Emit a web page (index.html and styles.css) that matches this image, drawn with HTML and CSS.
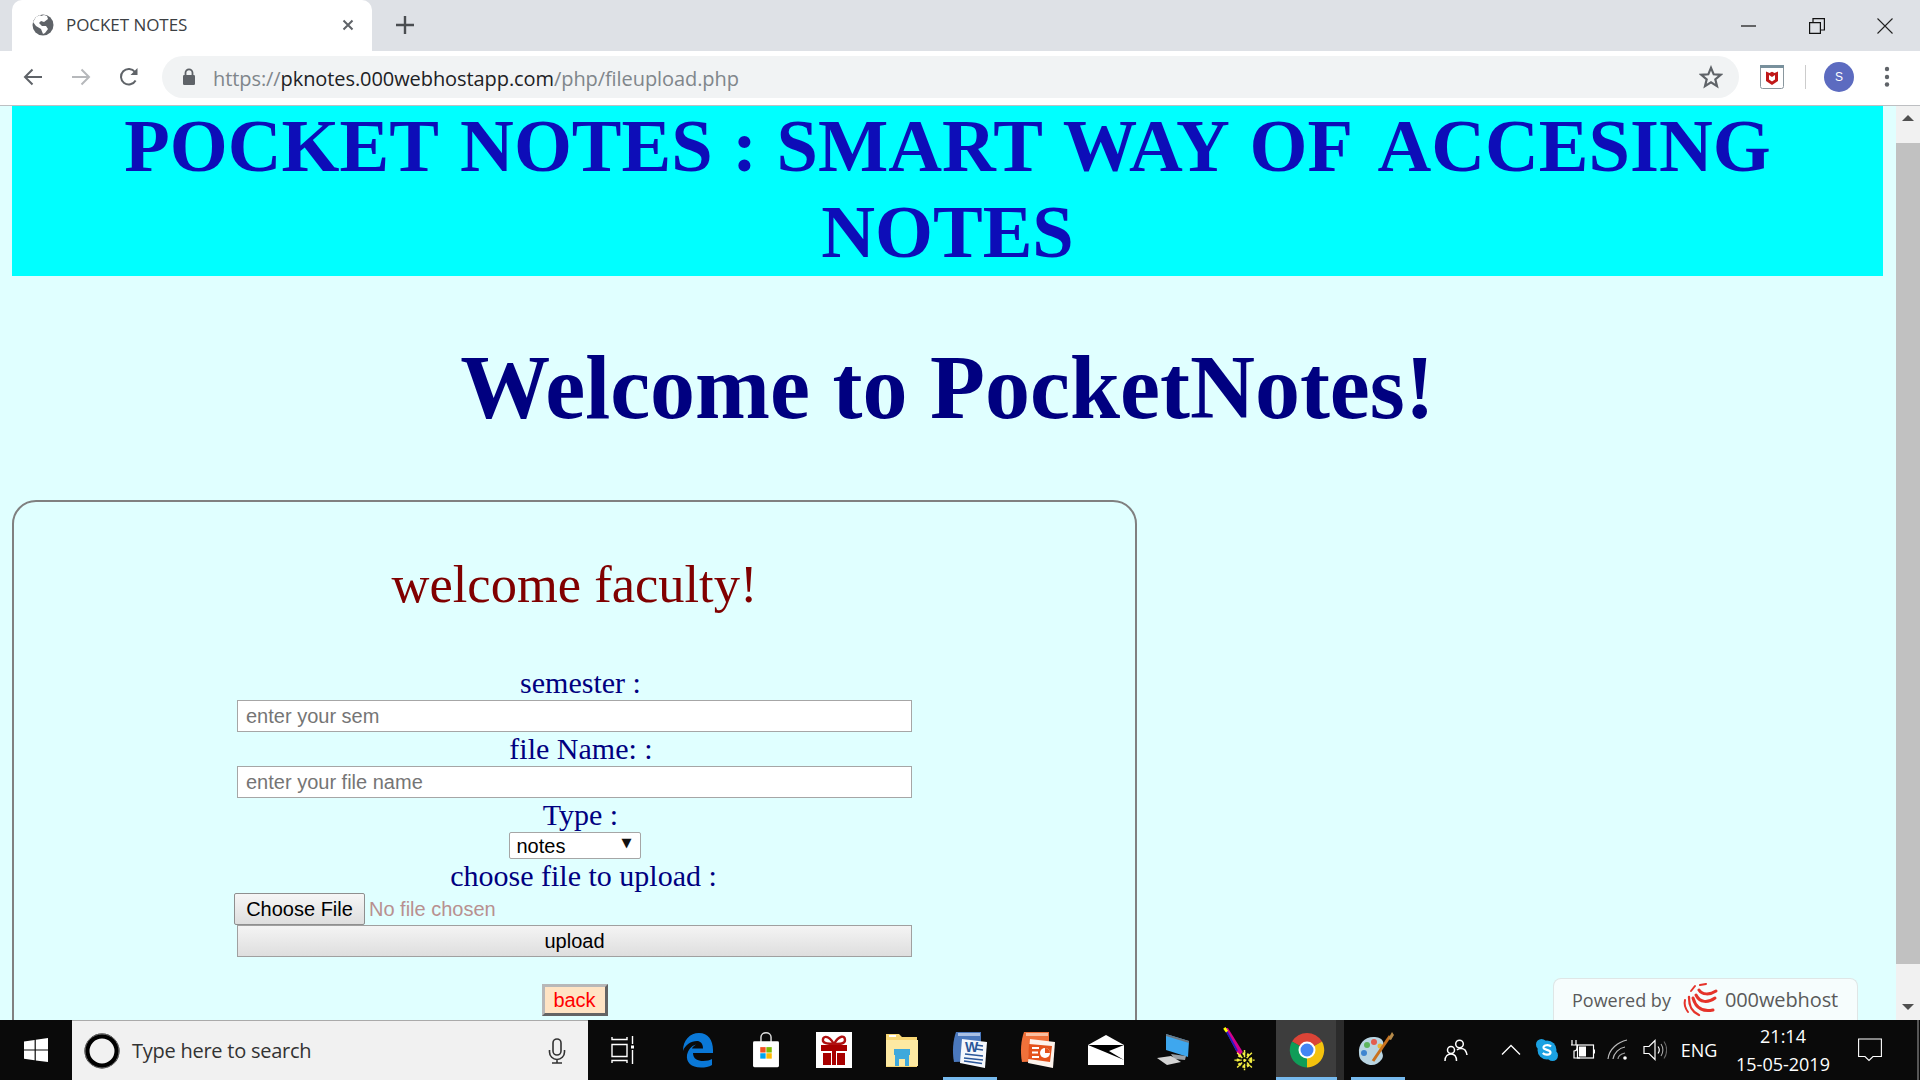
FILE: index.html
```html
<!DOCTYPE html>
<html lang="en">
<head>
<meta charset="utf-8">
<title>POCKET NOTES</title>
<link rel="stylesheet" href="styles.css">
</head>
<body>
<div class="tabstrip">
  <div class="tab">
    <svg class="fav" viewBox="0 0 22 22"><circle cx="11" cy="11" r="10.5" fill="#5f6368"/><path d="M12 1 l3 1 l1 3 l-4 3 l-3-1 l-2 2 l3 3 l4 0 l2 3 l-3 4 l-2 1 l-2-5 l-5-3 l-3-4 l3-5 l4-2 l1 1 z" fill="#fff"/></svg>
    <span class="tab-title">POCKET NOTES</span>
    <svg class="tab-x" viewBox="0 0 12 12"><path d="M1.5 1.5 L10.5 10.5 M10.5 1.5 L1.5 10.5" stroke="#5f6368" stroke-width="2"/></svg>
  </div>
  <svg class="plus" viewBox="0 0 18 18"><path d="M9 0 V18 M0 9 H18" stroke="#4a4d51" stroke-width="2.4"/></svg>
  <div class="winctl">
    <svg viewBox="0 0 16 16" class="wbtn"><path d="M0 8 H15" stroke="#111" stroke-width="1.2"/></svg>
    <svg viewBox="0 0 16 16" class="wbtn"><path d="M.6 4.6 H11.4 V15.4 H.6 Z M4 4.6 V.6 H15.4 V12 H11.4" fill="none" stroke="#111" stroke-width="1.2"/></svg>
    <svg viewBox="0 0 16 16" class="wbtn"><path d="M.5 .5 L15.5 15.5 M15.5 .5 L.5 15.5" stroke="#222" stroke-width="1.1"/></svg>
  </div>
</div>
<div class="toolbar">
  <svg class="nav" viewBox="0 0 20 20"><path d="M19 10 H2 M9.5 2.5 L2 10 L9.5 17.5" fill="none" stroke="#5f6368" stroke-width="2"/></svg>
  <svg class="nav" viewBox="0 0 20 20"><path d="M1 10 H18 M10.5 2.5 L18 10 L10.5 17.5" fill="none" stroke="#b6b8bb" stroke-width="2"/></svg>
  <svg class="nav" viewBox="0 0 20 20"><path d="M16.6 13.5 A7.8 7.8 0 1 1 16 5" fill="none" stroke="#5f6368" stroke-width="2"/><path d="M18.5 1 V8 H11.5 Z" fill="#5f6368"/></svg>
  <div class="omnibox">
    <svg class="lock" viewBox="0 0 14 18"><path d="M3.5 7 V4.8 a3.5 3.5 0 0 1 7 0 V7" fill="none" stroke="#5f6368" stroke-width="1.8"/><rect x="1" y="7" width="12" height="10" rx="1.2" fill="#5f6368"/></svg>
    <span class="url"><span class="url-dim">https://</span>pknotes.000webhostapp.com<span class="url-dim">/php/fileupload.php</span></span>
    <svg class="star" viewBox="0 0 24 24"><path d="M12 2.8 L14.7 9.3 L21.7 9.8 L16.3 14.3 L18 21.1 L12 17.4 L6 21.1 L7.7 14.3 L2.3 9.8 L9.3 9.3 Z" fill="none" stroke="#5f6368" stroke-width="2.2"/></svg>
  </div>
  <div class="ext">
    <svg viewBox="0 0 24 24" class="ext-ic"><rect x=".5" y=".5" width="23" height="23" rx="2" fill="#fff" stroke="#8a979e"/><rect x="0" y="0" width="24" height="3" fill="#78909c"/><path d="M6 6.5 L9.5 8 L12 6.8 L14.5 8 L18 6.5 V16 L12 20 L6 16 Z M9 10 V14.5 L12 16.5 L15 14.5 V10 L12 12 Z" fill="#c01818" fill-rule="evenodd"/></svg>
    <span class="ext-div"></span>
    <span class="avatar">S</span>
    <svg class="dots" viewBox="0 0 6 24"><circle cx="3" cy="4" r="2.2" fill="#5f6368"/><circle cx="3" cy="12" r="2.2" fill="#5f6368"/><circle cx="3" cy="19.5" r="2.2" fill="#5f6368"/></svg>
  </div>
</div>
<div class="viewport">
  <main class="page">
    <h1 class="banner"><span class="banner-1">POCKET <span class="tight">NOTES : </span>SMART WAY <span class="gap">OF</span> ACCESING</span> <span class="banner-2">NOTES</span></h1>
    <h2 class="welcome">Welcome to PocketNotes!</h2>
    <section class="panel">
      <h3 class="faculty">welcome faculty!</h3>
      <form class="form">
        <label class="lbl lbl-a">semester :</label>
        <input class="field" type="text" placeholder="enter your sem">
        <label class="lbl lbl-c">file Name: :</label>
        <input class="field" type="text" placeholder="enter your file name">
        <label class="lbl lbl-a">Type :</label>
        <span class="selwrap"><select class="sel"><option>notes</option></select></span>
        <label class="lbl lbl-b">choose file to upload :</label>
        <input class="file" type="file">
        <button class="upload" type="button">upload</button>
        <button class="back" type="button">back</button>
      </form>
    </section>
    <div class="badge">
      <span class="badge-a">Powered by</span>
      <svg class="badge-logo" viewBox="0 0 36 34"><g fill="none" stroke="#e5332a" stroke-linecap="round"><path d="M34 8 C28 12 20 12 17 7" stroke-width="3"/><path d="M33 15 C26 20 18 20 14 12" stroke-width="3"/><path d="M31 27 C22 29 14 26 11 15" stroke-width="3"/><path d="M17 32 C10 29 7 24 7 14" stroke-width="2.4"/><path d="M6 29 C3 25 2 21 3 17" stroke-width="2"/><path d="M9 8 L13 3" stroke-width="2"/><path d="M18 2 L24 1" stroke-width="2"/></g></svg>
      <span class="badge-b">000webhost</span>
    </div>
  </main>
  <div class="scrollbar">
    <span class="arrow-up"></span>
    <span class="thumb"></span>
    <span class="arrow-down"></span>
  </div>
</div>
<footer class="taskbar">
  <div class="start"><svg viewBox="0 0 24 24" class="win"><path d="M0 3.4 L10.6 1.9 V11.4 H0 Z M11.8 1.7 L24 0 V11.4 H11.8 Z M0 12.6 H10.6 V22.2 L0 20.7 Z M11.8 12.6 H24 V24 L11.8 22.4 Z" fill="#fff"/></svg></div>
  <div class="search">
    <svg class="cortana" viewBox="0 0 36 36"><circle cx="18" cy="18" r="15" fill="none" stroke="#000" stroke-width="5"/><circle cx="18" cy="18" r="17" fill="none" stroke="#777" stroke-width="1"/></svg>
    <span class="search-text">Type here to search</span>
    <svg class="mic" viewBox="0 0 18 26"><rect x="5" y="1" width="8" height="16" rx="4" fill="none" stroke="#333" stroke-width="1.6"/><path d="M1.5 12 V14 a7.5 7.5 0 0 0 15 0 V12 M9 21.5 V25 M4 25 H14" fill="none" stroke="#333" stroke-width="1.6"/></svg>
  </div>
  <div class="slot slot-tv"><svg viewBox="0 0 24 28" class="ic-tv"><path d="M1 1 V3.500 H16 V1 M1 8.500 H16 V20.500 H1 Z M1 27 V24.500 H16 V27 M21.500 0 V8 M21.500 14 V28" fill="none" stroke="#fff" stroke-width="1.4"/><rect x="20" y="9.500" width="3" height="3" fill="#fff"/></svg></div>
  <div class="slot"><svg viewBox="0 0 32 36" class="ic-e"><path d="M1 19 C1 8 8 1 17 1 C26 1 31 8 31 18 V21 H11 C11 27 16 29 21 29 C25 29 28 28 30 27 V33 C27 35 23 35.500 19 35.500 C9 35.500 4 30 5 23 C6 18 9 14 14 12.500 C11 14.500 10 16 10 16.500 H21 C21 11 18 9 15 9 C9 9 3 13 1 19 Z" fill="#0a78d7"/></svg></div>
  <div class="slot"><svg viewBox="0 0 36 50" class="ic-36"><path d="M11 14 V7 a7 6 0 0 1 14 0 V14" fill="none" stroke="#ddd" stroke-width="2"/><rect x="0" y="13" width="36" height="36" rx="2" fill="#fff"/><rect x="10" y="21" width="7.500" height="7.500" fill="#f25022"/><rect x="18.500" y="21" width="7.500" height="7.500" fill="#7fba00"/><rect x="10" y="29.500" width="7.500" height="7.500" fill="#00a4ef"/><rect x="18.500" y="29.500" width="7.500" height="7.500" fill="#ffb900"/></svg></div>
  <div class="slot"><svg viewBox="0 0 36 36" class="ic-36"><rect width="36" height="36" fill="#fff"/><path d="M18 12 C12 2 6 4 7 9 C8 12 14 12 18 12 C24 12 29 12 29 8 C29 3 23 3 18 12 Z" fill="none" stroke="#b01010" stroke-width="2.400"/><path d="M5 13 H31 V19 H20 V33 H16 V19 H5 Z" fill="#a80000"/><rect x="7" y="21" width="8" height="12" fill="#a80000"/><rect x="21" y="21" width="8" height="12" fill="#a80000"/></svg></div>
  <div class="slot"><svg viewBox="0 0 32 36" class="ic-36"><path d="M0 2 H13 L16 5 H31 V35 H0 Z" fill="#f8d775"/><rect x="0" y="8" width="32" height="26" fill="#fde9a2"/><rect x="3" y="3" width="7" height="2" fill="#fff"/><path d="M9 34 V22 L16 17 L23 22 V34 H19 V27 H13 V34 Z" fill="#3fa9dc"/><rect x="8" y="17" width="16" height="6" fill="#3fa9dc"/></svg></div>
  <div class="slot slot-on"><svg viewBox="0 0 36 36" class="ic-36"><path d="M4 0 H29 V29 L2 30 C0 20 1 8 4 0 Z" fill="#4a78bd"/><path d="M6 1 H28 V4 H6 Z" fill="#a9c0e4"/><path d="M10 7 L35 10 L33 36 L8 31 Z" fill="#f5f7fc"/><text x="13" y="20" class="doc-w">W</text><path d="M24 13 L31 14 M24 17 L31 18 M13 22 L31 24 M12 26 L31 28 M12 29 L30 31.500" stroke="#2b579a" stroke-width="1.700"/></svg></div>
  <div class="slot"><svg viewBox="0 0 36 36" class="ic-36"><path d="M4 0 H29 V29 L2 30 C0 20 1 8 4 0 Z" fill="#f0713a"/><path d="M6 1 H28 V4 H6 Z" fill="#f9bfa0"/><path d="M10 7 L35 10 L33 36 L8 31 Z" fill="#fdf3ec"/><path d="M9 12 L32 14 L30 30 L8 27 Z" fill="#e4521b"/><circle cx="25" cy="21" r="5" fill="#fff"/><path d="M25 21 V16 A5 5 0 0 1 30 21 Z" fill="#e4521b"/><path d="M12 16 H19 M12 20.500 H18 M12 25 H19" stroke="#fff" stroke-width="2.200"/></svg></div>
  <div class="slot"><svg viewBox="0 0 36 30" class="ic-mail"><path d="M18 0 L36 10 V30 H0 V10 Z" fill="#fff"/><path d="M0 10 H36 L21 16 L36 25 L17 17 Z" fill="#000"/></svg></div>
  <div class="slot"><svg viewBox="0 0 34 34" class="ic-pc"><path d="M9 1 L32 8 L31 24 L9 17 Z" fill="#3ea7ee"/><path d="M9 1 L32 8 L32 10 L9 3 Z" fill="#6d7780"/><path d="M14 21 L29 23 L28 27 L17 26 Z" fill="#9aa0a5"/><path d="M0 25 L14 23 L24 29 L10 32 Z" fill="#d4d4d4"/></svg></div>
  <div class="slot slot-pen"><svg viewBox="0 0 34 50" class="ic-36b"><path d="M1 1 L5 1 L21 27 L17 32 Z" fill="#d4008f"/><path d="M2 2 L15 26" stroke="#2020c0" stroke-width="2"/><path d="M1 1 L4 5" stroke="#ff0" stroke-width="3"/><circle cx="23" cy="36" r="7" fill="none" stroke="#f4ee42" stroke-width="3" stroke-dasharray="3 2"/><path d="M23 25 V47 M12 36 H34 M15 28 L31 44 M31 28 L15 44" stroke="#f4ee42" stroke-width="1.600" stroke-dasharray="3 2"/></svg></div>
  <div class="slot slot-chrome"><svg viewBox="0 0 36 36" class="ic-chrome"><path d="M18 18 L3 9.500 A17.500 17.500 0 0 1 33 9.500 Z" fill="#db4437"/><path d="M18 18 L33 9.500 A17.500 17.500 0 0 1 18 35.500 Z" fill="#f4c20d"/><path d="M18 18 L18 35.500 A17.500 17.500 0 0 1 3 9.500 Z" fill="#0f9d58"/><circle cx="18" cy="18" r="8.500" fill="#fff"/><circle cx="18" cy="18" r="6.500" fill="#4285f4"/></svg></div>
  <div class="slot slot-on slot-paint"><svg viewBox="0 0 38 38" class="ic-paint"><path d="M2 22 C1 13 8 5 18 6 C27 7 28 13 25 17 C23 21 28 23 25 28 C21 34 14 36 8 32 C4 30 2 27 2 22 Z" fill="#b9d5e2"/><circle cx="10" cy="14" r="3" fill="#5eb55e"/><circle cx="17" cy="11" r="3" fill="#e35d4f"/><circle cx="7" cy="22" r="3" fill="#3f86d0"/><circle cx="23" cy="15" r="2.500" fill="#e8b83a"/><path d="M16 30 L33 5" stroke="#c9711d" stroke-width="3"/><path d="M31 8 L35 1 L37 4 L34 9 Z" fill="#b58a4a"/></svg></div>
  <div class="tray">
    <svg class="ic-people" viewBox="0 0 24 24"><circle cx="15.500" cy="6" r="3.800" fill="none" stroke="#fff" stroke-width="1.500"/><circle cx="7" cy="12" r="3.500" fill="none" stroke="#fff" stroke-width="1.500"/><path d="M1 23 C1 18 4 16 7 16 C10 16 12.500 18 12.500 23 M13 12 C15 10 19 10 21 12 C22 13.500 23 15 23 17" fill="none" stroke="#fff" stroke-width="1.500"/></svg>
    <svg class="ic-chev" viewBox="0 0 20 12"><path d="M1 10.500 L10 1.500 L19 10.500" fill="none" stroke="#fff" stroke-width="1.300"/></svg>
    <svg class="ic-tray" viewBox="0 0 24 24"><circle cx="12" cy="12" r="9.500" fill="#1ba1e2"/><circle cx="6.500" cy="6.500" r="5.500" fill="#1ba1e2"/><circle cx="17.500" cy="17.500" r="5.500" fill="#1ba1e2"/><path d="M16 8.500 C14 6.500 8 6.800 8.500 9.800 C9 12.300 15.500 11.500 15.500 14.500 C15.500 17 10 17.500 7.800 15" fill="none" stroke="#fff" stroke-width="2.200"/></svg>
    <svg class="ic-tray" viewBox="0 0 24 24"><path d="M1 2 V7 M5 2 V7 M0 7 H6 V10 C6 12 5 13 3 13 V20 H9" fill="none" stroke="#fff" stroke-width="1.200"/><rect x="6.500" y="7" width="16" height="13" fill="none" stroke="#fff" stroke-width="1.200"/><path d="M8 8.500 H15 V18.500 H8 Z" fill="#fff"/><rect x="23" y="11.500" width="1" height="4" fill="#fff"/></svg>
    <svg class="ic-tray" viewBox="0 0 24 24"><path d="M1 21 C2 11 11 4 20 2 M6 21 C7 15 12 10 18 9" fill="none" stroke="#bbb" stroke-width="1.200"/><path d="M11 21 C11 18 14 16 18 15" fill="none" stroke="#999" stroke-width="1.200"/><circle cx="18" cy="20" r="1.800" fill="#fff"/></svg>
    <svg class="ic-tray" viewBox="0 0 24 24"><path d="M1 8.500 H6 L12 2.500 V21.500 L6 15.500 H1 Z" fill="none" stroke="#fff" stroke-width="1.200"/><path d="M15 8.500 C16.500 10.500 16.500 13.500 15 15.500" fill="none" stroke="#fff" stroke-width="1.200"/><path d="M18 6 C20.500 9.500 20.500 14.500 18 18" fill="none" stroke="#aaa" stroke-width="1.100"/><path d="M21 3.500 C24.500 8.500 24.500 15.500 21 20.500" fill="none" stroke="#666" stroke-width="1.100"/></svg>
    <span class="eng">ENG</span>
    <span class="clock"><span>21:14</span><span>15-05-2019</span></span>
    <svg class="ic-note" viewBox="0 0 24 24"><path d="M.6 1 H23.400 V18.500 H15 L11 22.500 L7 18.500 H.6 Z" fill="none" stroke="#fff" stroke-width="1.100"/></svg>
    <span class="tray-end"></span>
  </div>
</footer>
</body>
</html>
```
FILE: styles.css
```css
* { box-sizing: border-box; }
html, body { margin: 0; height: 100%; }
body { display: flex; flex-direction: column; height: 1080px; width: 1920px; overflow: hidden; font-family: "Liberation Sans", sans-serif; }

.tabstrip { height: 51px; background: #dee1e6; display: flex; align-items: stretch; flex: none; padding-left: 12px; }
.tab { width: 360px; background: #fff; border-radius: 10px 10px 0 0; display: flex; align-items: center; padding: 0 18px 1px 20px; }
.fav { width: 22px; height: 22px; flex: none; }
.tab-title { font: 17px "Open Sans", sans-serif; color: #3c4043; margin: -1px 0 0 12px; flex: 1; letter-spacing: -.05px; }
.tab-x { width: 12px; height: 12px; }
.plus { width: 18px; height: 18px; align-self: center; margin: -1px 0 0 24px; }
.winctl { margin-left: auto; display: flex; align-items: center; gap: 52px; padding-right: 27px; }
.wbtn { width: 16px; height: 16px; display: block; }

.toolbar { height: 55px; background: #fff; border-bottom: 1px solid #bdbfc2; display: flex; align-items: center; flex: none; padding: 0 0 2px 23px; }
.nav { width: 20px; height: 20px; margin-right: 28px; flex: none; }
.omnibox { width: 1577px; height: 42px; margin-left: -5px; background: #f1f3f4; border-radius: 21px; display: flex; align-items: center; padding: 0 16px 0 20px; flex: none; }
.lock { width: 14px; height: 18px; flex: none; }
.url { font: 20px "Open Sans", sans-serif; color: #202124; margin: 2px 0 0 17px; flex: 1; letter-spacing: -.08px; }
.url-dim { color: #80868b; }
.star { width: 24px; height: 24px; }
.ext { display: flex; align-items: center; padding-left: 21px; }
.ext-ic { width: 24px; height: 24px; }
.ext-div { width: 1px; height: 24px; background: #ccc; margin: 0 18px 0 21px; }
.avatar { width: 30px; height: 30px; border-radius: 50%; background: #5c6bc0; color: #fff; font: 12px "Liberation Sans", sans-serif; display: flex; align-items: center; justify-content: center; }
.dots { width: 6px; height: 24px; margin-left: 30px; }

.viewport { flex: 1; min-height: 0; display: flex; }
.page { position: relative; flex: 1; min-width: 0; background: #e0ffff; padding: 0 13px 0 12px; overflow: hidden; font-family: "Liberation Serif", serif; }
.banner { margin: 0; background: #00ffff; color: #0d0db8; font-size: 74.500px; font-weight: bold; text-align: center; word-spacing: 3.900px; }
.banner-1 { display: block; line-height: 80.600px; }
.tight { word-spacing: .9px; }
.gap { margin-right: 6px; }
.banner-2 { display: block; line-height: 85.500px; margin-top: 3.800px; }
.welcome { margin: 0; padding: 60.500px 0 0; color: #000080; font-size: 90px; line-height: 104px; font-weight: bold; text-align: center; }
.panel { margin-top: 60px; width: 1125px; height: 700px; border: 2px solid #808080; border-radius: 24px; }
.faculty { margin: 0; padding-top: 54px; color: #800000; font-size: 52.500px; line-height: 57px; font-weight: normal; text-align: center; }
.form { width: 675px; margin: 53px auto 0; display: flex; flex-direction: column; align-items: center; }
.lbl { display: block; color: #000080; font-size: 30px; line-height: 34px; height: 34px; }
.lbl-a { padding-left: 12px; }
.lbl-b { padding-left: 18px; }
.lbl-c { padding-left: 13px; }
.field { display: block; width: 675px; height: 32px; border: 1.500px solid #a6a6a6; background: #fff; padding: 0 8px; font: 20px "Liberation Sans", sans-serif; border-radius: 0; outline: 0; }
.field::placeholder { color: #757575; }
.selwrap { position: relative; display: block; width: 132px; height: 27px; }
.selwrap::after { content: "▼"; position: absolute; right: 9px; top: 3px; font: 13px "DejaVu Sans", sans-serif; color: #111; pointer-events: none; }
.sel { appearance: none; -webkit-appearance: none; display: block; width: 132px; height: 27px; background: #fff; border: 1.500px solid #a6a6a6; border-radius: 2px; padding: 0 7px; font: 20px "Liberation Sans", sans-serif; color: #000; outline: 0; }
.file { display: block; width: 681px; height: 32px; align-self: flex-start; margin-left: -3px; font: 20px "Liberation Sans", sans-serif; color: #b89090; padding: 0; }
.file::file-selector-button { width: 131px; height: 32px; margin: 0 4px 0 0; border: 1.500px solid #8f8f8f; border-radius: 2px; background: linear-gradient(#f6f6f6, #dedede); font: 20px "Liberation Sans", sans-serif; color: #000; padding: 0; }
.upload { display: block; width: 675px; height: 32px; border: 1.500px solid #a0a0a0; background: linear-gradient(#f4f4f4, #dedede); font: 20px "Liberation Sans", sans-serif; color: #000; padding: 0; }
.back { display: block; width: 66px; height: 32px; margin-top: 27px; background: #ffe4c4; border: 3px outset #b8b8b8; color: #f00; font: 20px "Liberation Sans", sans-serif; padding: 0; }

.badge { position: absolute; left: 1553px; top: 872px; width: 305px; height: 42px; background: #f6fdfd; border: 1.500px solid #dfe6e6; border-bottom: 0; border-radius: 8px 8px 0 0; display: flex; align-items: center; padding: 0 0 0 18px; color: #5a5a5a; }
.badge-a { font: 18px "Open Sans", sans-serif; }
.badge-logo { width: 36px; height: 34px; margin-left: 11px; }
.badge-b { font: 500 20px "Open Sans", sans-serif; margin-left: 7px; letter-spacing: -.1px; }

.scrollbar { width: 24px; flex: none; background: #f1f1f1; display: flex; flex-direction: column; align-items: center; }
.arrow-up { width: 0; height: 0; margin-top: 9px; border: 6px solid transparent; border-top: 0; border-bottom: 6px solid #505050; flex: none; }
.thumb { width: 100%; height: 821px; margin-top: 22px; background: #c1c1c1; flex: none; }
.arrow-down { width: 0; height: 0; margin-top: 40px; border: 6px solid transparent; border-bottom: 0; border-top: 6px solid #505050; flex: none; }

.taskbar { height: 60px; flex: none; background: #0a0a0a; display: flex; align-items: stretch; }
.start { width: 72px; display: flex; align-items: center; justify-content: center; }
.win { width: 24px; height: 24px; }
.search { width: 516px; background: #f1f1f1; display: flex; align-items: center; padding: 0 22px 0 12px; border-top: 1px solid #aaa; }
.cortana { width: 36px; height: 36px; flex: none; }
.search-text { font: 20px "Open Sans", sans-serif; color: #333; margin-left: 12px; flex: 1; letter-spacing: -.25px; }
.mic { width: 18px; height: 26px; }
.slot { width: 68px; display: flex; align-items: center; justify-content: center; position: relative; flex: none; }
.slot-tv { width: 76px; padding-right: 6px; }
.slot-pen { padding-right: 6px; }
.slot-paint { padding-right: 4px; }
.slot-on::after { content: ""; position: absolute; left: 7px; right: 7px; bottom: 0; height: 3px; background: #76b9ed; }
.slot-chrome { background: linear-gradient(to right, #3d3d3d 60px, #2b2b2b 60px); padding-right: 7px; }
.slot-chrome::after { content: ""; position: absolute; left: 0; right: 7px; bottom: 0; height: 3px; background: #76b9ed; }
.ic-tv { width: 24px; height: 28px; }
.ic-e { width: 32px; height: 36px; }
.ic-36 { width: 36px; height: 36px; }
.ic-36b { width: 34px; height: 46px; }
.ic-mail { width: 36px; height: 30px; }
.ic-pc { width: 34px; height: 34px; }
.ic-chrome { width: 36px; height: 36px; }
.ic-paint { width: 38px; height: 38px; }
.doc-w { font: bold 14px "Liberation Sans", sans-serif; fill: #2b579a; }

.tray { margin-left: auto; display: flex; align-items: center; width: 490px; color: #fff; font: 18px "Open Sans", sans-serif; }
.ic-people { width: 24px; height: 24px; margin: 0 33px 0 14px; flex: none; }
.ic-chev { width: 20px; height: 12px; margin-right: 14px; flex: none; }
.ic-tray { width: 24px; height: 24px; margin-right: 12px; flex: none; }
.eng { width: 44px; margin-left: -2px; text-align: center; flex: none; }
.clock { width: 114px; margin-left: 5px; display: flex; flex-direction: column; align-items: center; line-height: 28px; flex: none; }
.ic-note { width: 24px; height: 24px; margin-left: 18px; flex: none; }
.tray-end { width: 2px; height: 60px; background: #555; margin-left: 35px; flex: none; }
```
